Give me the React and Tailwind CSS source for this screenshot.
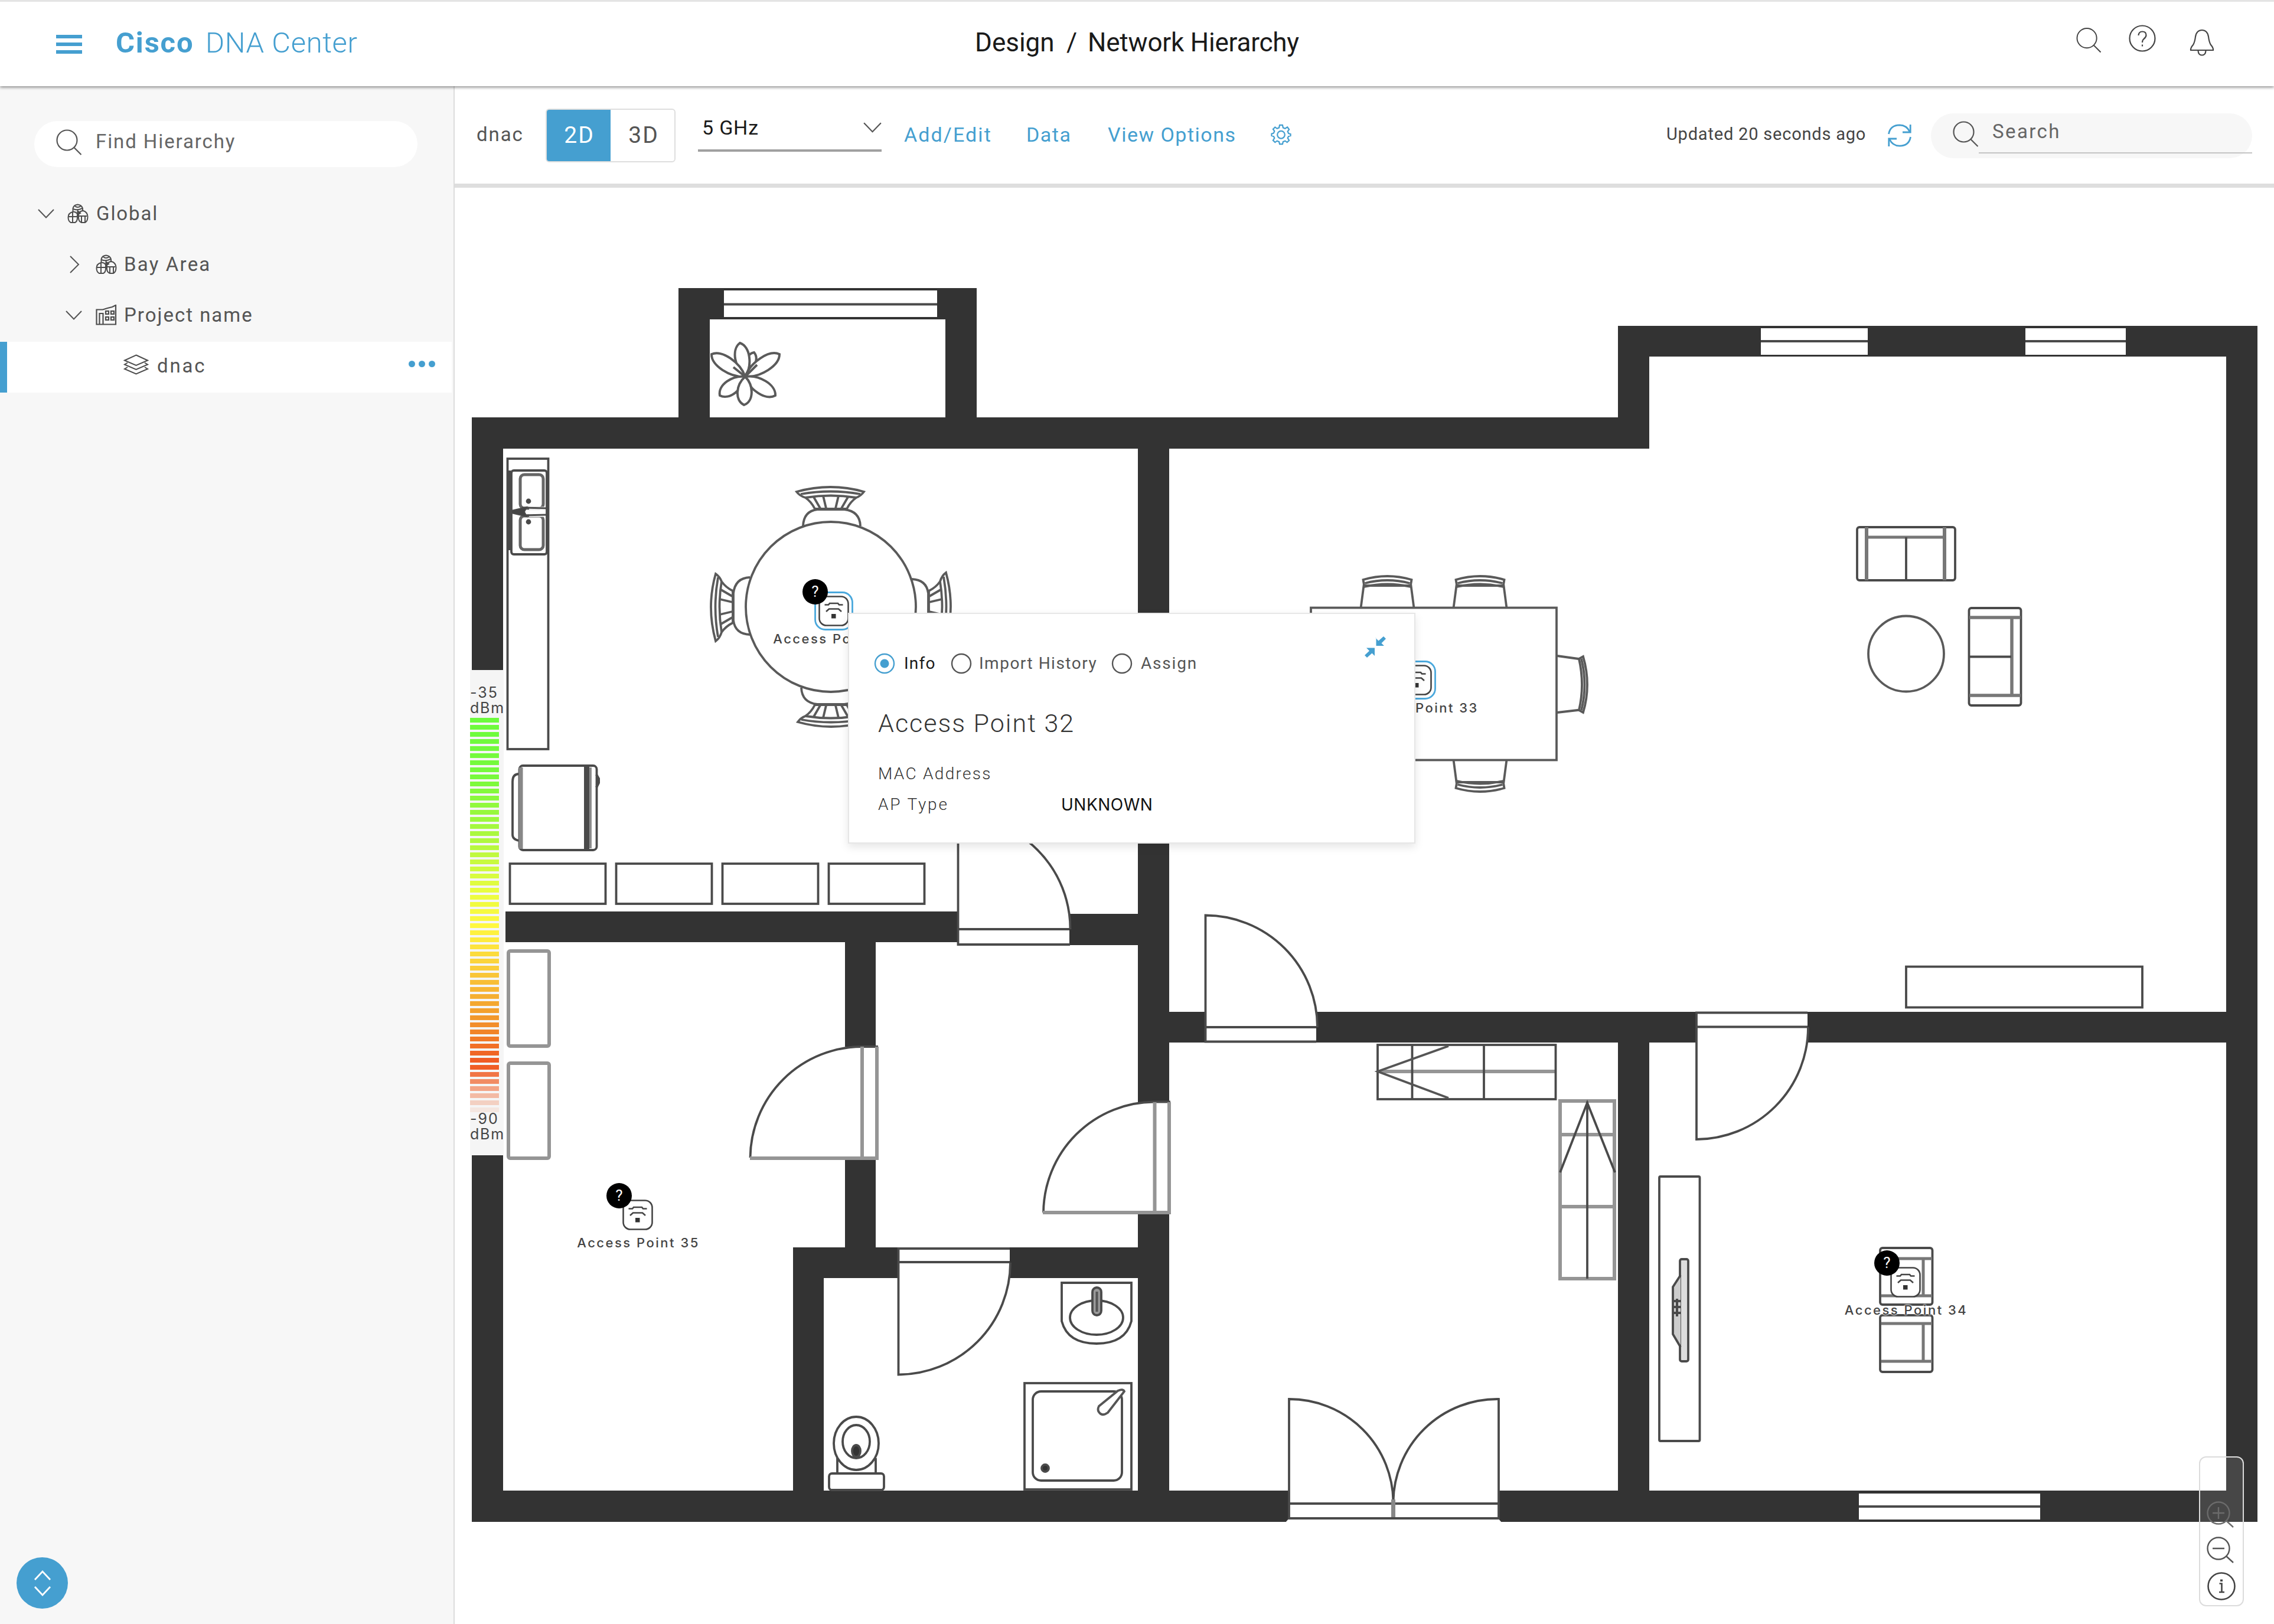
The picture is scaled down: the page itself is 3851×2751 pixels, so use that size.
import React from "react";

const MAP_X = 770;
const MAP_Y = 318;

/* ---------- small icons ---------- */

function SearchIcon({ className, color = "#555", width = 2.2 }) {
  return (
    <svg className={className} viewBox="0 0 44 44" fill="none" stroke={color} strokeWidth={width}>
      <circle cx="18.5" cy="18.5" r="17" />
      <path d="M30.5 31 L42.5 43" />
    </svg>
  );
}

function Chevron({ dir = "down", className }) {
  return (
    <svg className={className} viewBox="0 0 28 16" fill="none" stroke="#555" strokeWidth="2">
      {dir === "down" ? <path d="M1 1 L14 14.5 L27 1" /> : <path d="M7 -6 L21 8 L7 22" />}
    </svg>
  );
}

function SiteIcon() {
  return (
    <svg className="h-[34px] w-[36px] shrink-0" viewBox="0 0 36 34" fill="none" stroke="#4d4d4d" strokeWidth="2">
      <path d="M9.5 14 V8 Q11 2 17.500 1.500 Q24 2 26 8 V12" />
      <path d="M10 9 Q17 12 25 8 M13 4 Q17 8 23 4" />
      <path d="M17 17 Q13 13 9 14 Q1.500 16 1.500 23 Q1.500 30 6 32 H13 Q17 30 17 24 Z" />
      <path d="M19 17 Q22 12 27 12 Q34 14 34.500 22 Q34.500 30 30 32 H24 Q19 30 19 24 Z" />
      <path d="M9 15 V31 M2 22 H16 M24 21 V32 M30 21 V32 M20 21 H33" />
      <path d="M17.500 12 L22 16 L17 19 Z" fill="#4d4d4d" />
    </svg>
  );
}

function BuildingIcon() {
  return (
    <svg className="h-[35px] w-[36px] shrink-0" viewBox="0 0 36 35" fill="none" stroke="#4d4d4d" strokeWidth="2.200">
      <path d="M1.500 33.500 V8.500 H12 L20 6 L28 4 L34 1 V33.500 Z" />
      <path d="M6.500 33 V15 H12.500 V33" />
      <rect x="17" y="11" width="5" height="5" />
      <rect x="26" y="11" width="5" height="5" />
      <rect x="17" y="21" width="5" height="5" />
      <rect x="26" y="21" width="5" height="5" />
    </svg>
  );
}

function LayersIcon() {
  return (
    <svg className="h-[35px] w-[43px] shrink-0" viewBox="0 0 43 35" fill="none" stroke="#4d4d4d" strokeWidth="2">
      <path d="M21.500 1.500 L41 10.500 L21.500 19 L2 10.500 Z" />
      <path d="M7 14.500 L2 17.500 L21.500 26 L41 17.500 L36 14.500" />
      <path d="M7 22 L2 25 L21.500 33.500 L41 25 L36 22" />
    </svg>
  );
}

/* ---------- header ---------- */

function Header() {
  return (
    <header className="relative z-10 flex h-[146px] items-start border-t-[3px] border-[#e4e4e4] bg-white shadow-[0_2px_5px_rgba(0,0,0,0.45)]">
      <div className="flex w-[1651px] items-start">
        <div className="mt-[56px] ml-[95px] flex w-[44px] flex-col gap-[7px]">
          <div className="h-[6px] bg-[#459fd0]" />
          <div className="h-[6px] bg-[#459fd0]" />
          <div className="h-[6px] bg-[#459fd0]" />
        </div>
        <div className="mt-[40px] ml-[57px] flex leading-[60px] text-[49px] whitespace-nowrap text-[#459fd0]">
          <span className="w-[152px] font-bold tracking-[1.8px]">Cisco</span>
          <span className="font-light tracking-[0.6px]">DNA Center</span>
        </div>
      </div>
      <div className="mt-[39px] flex h-[60px] w-[1865px] text-[44px] leading-[60px] whitespace-nowrap text-[#1a1a1a]">
        <span className="w-[155px]">Design</span>
        <span className="w-[36px]">/</span>
        <span className="tracking-[-0.2px]">Network Hierarchy</span>
      </div>
      <SearchIcon className="mt-[43px] h-[44px] w-[43px]" color="#444" width={2} />
      <svg className="mt-[39px] ml-[46px] h-[46px] w-[46px]" viewBox="0 0 46 46" fill="none" stroke="#444" strokeWidth="2.200">
        <circle cx="23" cy="23" r="21.500" />
        <path d="M16.500 18 Q17 11.500 23 11.500 Q29.500 11.500 29.500 17.500 Q29.500 21 25.500 24 Q23 26 23 30" />
        <path d="M23 33.500 V36.500" />
      </svg>
      <svg className="mt-[46px] ml-[57px] h-[47px] w-[42px]" viewBox="0 0 42 47" fill="none" stroke="#444" strokeWidth="2.200">
        <path d="M2 36 Q1.500 32 6 27 Q9 22 10 13 Q12 2 21 2 Q30 2 32 13 Q33 22 36 27 Q40.500 32 40 36 Z" />
        <path d="M14.500 37 Q15 44.500 21 44.500 Q27 44.500 27.500 37" />
      </svg>
    </header>
  );
}

/* ---------- sidebar ---------- */

function Sidebar() {
  const label = "text-[33px] leading-[40px] whitespace-nowrap text-[#555]";
  return (
    <aside className="flex w-[770px] shrink-0 flex-col border-r-[2px] border-[#dcdcdc] bg-[#f7f7f7]">
      <div className="mt-[59px] ml-[58px] flex h-[78px] w-[649px] items-start rounded-full bg-white">
        <SearchIcon className="mt-[14px] ml-[37px] h-[44px] w-[44px]" />
        <span className="mt-[15px] ml-[23px] text-[33px] leading-[40px] tracking-[1.9px] text-[#666]">Find Hierarchy</span>
      </div>
      <div className="mt-[38px] flex h-[86px] items-center pb-[5px] pl-[64px]">
        <Chevron className="h-[16px] w-[28px]" />
        <div className="ml-[22px] flex"><SiteIcon /></div>
        <span className={`${label} ml-[13px] tracking-[1.9px]`}>Global</span>
      </div>
      <div className="flex h-[86px] items-center pb-[5px] pl-[112px]">
        <Chevron dir="right" className="h-[16px] w-[28px] overflow-visible" />
        <div className="ml-[22px] flex"><SiteIcon /></div>
        <span className={`${label} ml-[12px] tracking-[2.2px]`}>Bay Area</span>
      </div>
      <div className="flex h-[86px] items-center pb-[5px] pl-[111px]">
        <Chevron className="h-[16px] w-[28px]" />
        <div className="ml-[23px] flex"><BuildingIcon /></div>
        <span className={`${label} ml-[12px] tracking-[2px]`}>Project name</span>
      </div>
      <div className="mr-[3px] flex h-[86px] items-center border-l-[12px] border-[#459fd0] bg-white pl-[197px]">
        <div className="mt-[-10px] flex"><LayersIcon /></div>
        <span className={`${label} mt-[-5px] ml-[14px] tracking-[2.8px]`}>dnac</span>
        <div className="mt-[-11px] mr-[28px] ml-auto flex gap-[6px]">
          <div className="h-[11px] w-[11px] rounded-full bg-[#459fd0]" />
          <div className="h-[11px] w-[11px] rounded-full bg-[#459fd0]" />
          <div className="h-[11px] w-[11px] rounded-full bg-[#459fd0]" />
        </div>
      </div>
      <div className="mt-auto mb-[26px] ml-[28px] flex h-[87px] w-[87px] items-center justify-center rounded-full bg-[#459fd0]">
        <svg className="h-[46px] w-[34px]" viewBox="0 0 34 46" fill="none" stroke="#fff" strokeWidth="2.800">
          <path d="M4 17 L17 3 L30 17 M4 29 L17 43 L30 29" />
        </svg>
      </div>
    </aside>
  );
}

/* ---------- toolbar ---------- */

function Toolbar() {
  const link = "text-[34px] leading-[40px] whitespace-nowrap text-[#459fd0]";
  return (
    <div className="flex h-[172px] items-start border-b-[7px] border-[#dedede] bg-white">
      <span className="mt-[62px] ml-[37px] w-[117px] text-[33px] leading-[40px] tracking-[1.9px] text-[#555]">dnac</span>
      <div className="mt-[38px] flex h-[91px] w-[220px] overflow-hidden rounded-[6px] border-[2px] border-[#dedede] text-[39px]">
        <div className="mt-[-2px] ml-[-2px] flex h-[91px] w-[110px] items-center justify-center bg-[#459fd0] pl-[4px] tracking-[2px] text-white">2D</div>
        <div className="flex w-[108px] items-center justify-center pl-[4px] tracking-[2px] text-[#555]">3D</div>
      </div>
      <div className="mt-[38px] ml-[38px] flex h-[73px] w-[311px] items-start border-b-[4px] border-[#a0a0a0]">
        <span className="mt-[12px] ml-[7px] text-[34px] leading-[40px] tracking-[0.8px] text-[#1a1a1a]">5 GHz</span>
        <Chevron className="mt-[23px] ml-auto h-[18px] w-[31px]" />
      </div>
      <span className={`${link} mt-[62px] ml-[38px] w-[207px] tracking-[2.1px]`}>Add/Edit</span>
      <span className={`${link} mt-[62px] w-[138px] tracking-[1.5px]`}>Data</span>
      <span className={`${link} mt-[62px] w-[276px] tracking-[1.5px]`}>View Options</span>
      <svg className="mt-[64px] h-[36px] w-[35px]" viewBox="0 0 36 36" fill="none" stroke="#459fd0" strokeWidth="2.300">
        <path d="M15.500 1.500 H20.500 L21.500 6 L25 7.500 L29 5 L32 9 L29.500 12.500 L31 16 L34.500 17 V20 L31 21 L29.500 24 L32 28 L28.500 31.500 L25 29 L21.500 30.500 L20.500 34.500 H15.500 L14.500 30.500 L11 29 L7.500 31.500 L4 28 L6.500 24 L5 21 L1.500 20 V16.500 L5 15.500 L6.500 12 L4 8.500 L7.500 5 L11 7.500 L14.500 6 Z" />
        <circle cx="18" cy="18.200" r="6.500" />
      </svg>
      <span className="mt-[61px] ml-auto w-[375px] text-[29px] leading-[40px] tracking-[0.8px] whitespace-nowrap text-[#444]">Updated 20 seconds ago</span>
      <svg className="mt-[64px] h-[39px] w-[40px]" viewBox="0 0 40 39" fill="none" stroke="#459fd0" strokeWidth="2.800">
        <path d="M1.500 17 Q4 2 20 1.800 Q32 2 37 13" />
        <path d="M38.200 1 V14 H25" />
        <path d="M38.500 22 Q36 37 20 37.200 Q8 37 3 26" />
        <path d="M1.800 38 V25 H15" />
      </svg>
      <div className="mt-[46px] mr-[37px] ml-[33px] flex h-[76px] w-[544px] items-start rounded-full bg-[#f7f7f7]">
        <SearchIcon className="mt-[13px] ml-[37px] h-[44px] w-[44px]" />
        <div className="flex h-[68px] flex-1 items-start border-b-[2px] border-[#c4c4c4]">
          <span className="mt-[11px] ml-[23px] text-[33px] leading-[40px] tracking-[2.4px] text-[#666]">Search</span>
        </div>
      </div>
    </div>
  );
}

/* ---------- floor plan drawing ---------- */

function Petal({ x, y, w = 11 }) {
  const cx = 1262, cy = 638;
  const len = Math.hypot(x - cx, y - cy);
  const ang = (Math.atan2(y - cy, x - cx) * 180) / Math.PI;
  return (
    <path
      transform={`translate(${cx} ${cy}) rotate(${ang})`}
      d={`M0 0 C ${len * 0.3} ${-w * 1.400} ${len * 0.850} ${-w * 1.500} ${len} 0 C ${len * 0.850} ${w * 1.500} ${len * 0.300} ${w * 1.400} 0 0 Z`}
    />
  );
}

function DiningChair({ angle }) {
  return (
    <g transform={`rotate(${angle} 1407 1028)`}>
      <path d="M1349 833 Q1407 817 1463 833 Q1458 840 1450 843 Q1440 850 1434 862 H1380 Q1374 850 1364 843 Q1354 840 1349 833 Z" />
      <path d="M1356 837 Q1407 828 1457 837 M1364 843 Q1407 836 1450 843" />
      <path d="M1378 842 L1389 861 M1394 840 L1399 861 M1420 840 L1415 861 M1436 842 L1425 861" />
      <path d="M1360 891 Q1361 866 1384 863 H1430 Q1456 866 1457 891" />
    </g>
  );
}

function TopChair({ x }) {
  return (
    <g transform={`translate(${x} 0)`}>
      <path d="M-45 1030 L-40 992 H40 L45 1030" />
      <path d="M-41 982 Q0 970 41 982 L39 994 Q0 985 -39 994 Z" />
      <path d="M-38 988 Q0 978 38 988" />
    </g>
  );
}

function FloorPlan() {
  return (
    <svg className="block h-[2433px] w-[3081px]" viewBox="770 318 3081 2433">
      {/* walls */}
      <g fill="#333">
        <path d="M1149 488 H1654 V707 H2740 V552 H3823 V2578 H799 V707 H1149 Z" />
      </g>
      <g fill="#fff">
        <rect x="1202" y="541" width="399" height="166" />
        <path d="M852 760 H1927 V1548 H1811 V1544 H852 Z" />
        <path d="M1980 760 H2793 V604 H3770 V1714 H1980 Z" />
        <path d="M852 1596 H1431 V2113 H1343 V2525 H852 Z" />
        <path d="M1483 1596 H1640 V1601 H1927 V2113 H1483 Z" />
        <rect x="1395" y="2165" width="532" height="360" />
        <rect x="1980" y="1766" width="760" height="759" />
        <rect x="2793" y="1766" width="977" height="759" />
        {/* window and door openings */}
        <rect x="1226" y="492" width="361" height="45" />
        <rect x="2982" y="556" width="181" height="45" />
        <rect x="3430" y="556" width="170" height="45" />
        <rect x="3148" y="2530" width="307" height="44" />
        <rect x="1624" y="1540" width="187" height="62" />
        <rect x="2043" y="1710" width="186" height="58" />
        <rect x="2874" y="1717" width="187" height="50" />
        <path d="M2183 2520 H2537 V2572 L2544 2580 H2176 L2183 2572 Z" />
        <rect x="1425" y="1773" width="62" height="191" />
        <rect x="1920" y="1867" width="62" height="188" />
        <rect x="1522" y="2117" width="188" height="50" />
        <rect x="850" y="1540" width="6" height="60" />
      </g>
      <g fill="none" stroke="#4a4a4a" strokeWidth="3.800">
        <path d="M1226 515.500 H1587 M2982 578 H3163 M3430 578 H3600 M3148 2552 H3455" />
        <path d="M1622.500 1384 V1600 H1812 M1624 1574 H1811" />
        <path d="M1622.500 1384 A190 190 0 0 1 1812.500 1574" />
        <path d="M2229 1764.500 H2041.500 V1550.500 A190 190 0 0 1 2231 1740 M2043 1740 H2229" />
        <path d="M3061 1715.500 H2873 V1930 A190 190 0 0 0 3062 1740 M2873 1739.500 H3061" />
        <path d="M2183 2572 V2370 A176 176 0 0 1 2359.500 2546 A176 176 0 0 1 2538 2370 V2572 Z M2183 2547 H2538" />
        <path d="M2359.500 2540 V2570" stroke="#888" strokeWidth="7" />
        <path d="M1710 2115 H1521.500 V2328.500 A190 190 0 0 0 1711 2139 M1522 2138 H1710" />
        <path d="M1487 1773 H1460 A190 190 0 0 0 1270.500 1961" />
        <path d="M1982 1866.500 H1955 A189 189 0 0 0 1767 2054" />
      </g>
      <g fill="none" stroke="#959595" strokeWidth="6">
        <path d="M1270 1962 H1485 V1773 M1460 1773 V1963" />
        <path d="M1766 2054 H1980 V1867 M1955.500 1867 V2054" />
        <rect x="861" y="1611" width="69" height="161" rx="3" />
        <rect x="861" y="1801" width="69" height="161" rx="3" />
        <path d="M2333 1815 H2635" />
        <rect x="2642" y="1865" width="92" height="301" />
        <path d="M2642 1922 H2734 M2642 2044 H2734" />
      </g>

      <g fill="none" stroke="#4a4a4a" strokeWidth="3.800">
        {/* plant */}
        <g fill="#fff" stroke="#5a5a5a" strokeWidth="4">
          <Petal x={1277} y={597} w={8} />
          <Petal x={1253} y={581} />
          <Petal x={1320} y={600} />
          <Petal x={1205} y={600} />
          <Petal x={1313} y={670} />
          <Petal x={1219} y={670} />
          <Petal x={1260} y={686} />
          <path d="M1262 638 L1242 622 M1262 638 L1282 618" />
        </g>

        {/* kitchen counter with sink */}
        <rect x="859.500" y="777" width="69" height="492" />
        <path d="M862 797 V932" strokeWidth="6" />
        <rect x="866" y="797" width="60" height="142" rx="4" />
        <rect x="881" y="804" width="39" height="57" rx="7" stroke="#666" strokeWidth="5" />
        <rect x="881" y="874" width="39" height="57" rx="7" stroke="#666" strokeWidth="5" />
        <path d="M896 861 H924 M896 873 H924" stroke="#fff" strokeWidth="5" />
        <path d="M867 867 H884 M884 860 L926 861 M884 873 L926 872" strokeWidth="3" />
        <path d="M866 865 L892 859 L888 867 L892 875 L866 869 Z" fill="#444" strokeWidth="2" />
        <circle cx="895" cy="849" r="2.500" fill="#444" />
        <circle cx="895" cy="884" r="2.500" fill="#444" />

        {/* stove */}
        <path d="M879 1311 Q868 1311 868 1324 V1414 Q868 1422 879 1424" />
        <rect x="879.500" y="1297" width="131" height="143" rx="6" />
        <path d="M882 1300 V1438" stroke="#888" strokeWidth="7" />
        <path d="M993.500 1297 V1440" strokeWidth="9" />
        <path d="M1000 1300 V1437" stroke="#888" />
        <path d="M1010 1312 L1014 1319 V1326 L1010 1334" strokeWidth="4" />

        {/* lower cabinets */}
        <rect x="863.500" y="1463" width="162" height="68" />
        <rect x="1043.500" y="1463" width="162" height="68" />
        <rect x="1223.500" y="1463" width="162" height="68" />
        <rect x="1403.500" y="1463" width="162" height="68" />

        {/* round dining table */}
        <g stroke="#5a5a5a">
          <DiningChair angle={0} />
          <DiningChair angle={90} />
          <DiningChair angle={180} />
          <DiningChair angle={270} />
          <circle cx="1407" cy="1028" r="144" fill="#fff" />
        </g>

        {/* conference table */}
        <g stroke="#5a5a5a">
          <TopChair x={2349.500} />
          <TopChair x={2506.500} />
          <g transform="translate(0 2317) scale(1 -1)">
            <TopChair x={2349.500} />
            <TopChair x={2506.500} />
          </g>
          <path d="M2637 1111 L2680 1117 M2637 1207 L2680 1202" />
          <path d="M2674 1116 Q2684 1160 2674 1203 L2681 1207 Q2695 1160 2681 1112 Z" fill="#fff" />
          <path d="M2678 1116 Q2689 1160 2678 1203" />
          <rect x="2220" y="1029.500" width="416" height="258" fill="#fff" />
        </g>

        {/* living room seating */}
        <rect x="3145" y="893" width="166" height="90" rx="4" />
        <path d="M3161 893 V983 M3293 893 V983" stroke="#777" strokeWidth="6" />
        <path d="M3161 910 H3293" stroke="#777" strokeWidth="5" />
        <path d="M3228 910 V983" />
        <circle cx="3228" cy="1107.500" r="64" stroke="#5a5a5a" />
        <rect x="3334.500" y="1030" width="88" height="165" rx="4" />
        <path d="M3335 1046 H3422 M3335 1178 H3422" stroke="#777" strokeWidth="5.500" />
        <path d="M3407 1046 V1178" stroke="#777" strokeWidth="5.500" />
        <path d="M3335 1112.500 H3406" />
        <rect x="3228" y="1637.500" width="400" height="69" />

        {/* hall shelves */}
        <rect x="2333" y="1770" width="301.500" height="92" />
        <path d="M2391.500 1770 V1862 M2513 1770 V1862" />
        <path d="M2453 1772 L2333 1815 L2453 1860" stroke="#555" />
        <path d="M2688 1866 V2166" />
        <path d="M2642 1986 L2688 1868 L2735 1986" />

        {/* wash basin */}
        <path d="M1798 2173 H1916 V2238 Q1906 2276 1857 2276 Q1808 2276 1798 2238 Z" />
        <ellipse cx="1857" cy="2232" rx="45" ry="29" />
        <rect x="1850" y="2181" width="15" height="47" rx="7.500" fill="#999" />
        <path d="M1857.500 2188 V2222" stroke="#555" strokeWidth="4" />

        {/* shower */}
        <rect x="1735" y="2343" width="181" height="180" />
        <rect x="1749" y="2357" width="151" height="151" rx="14" />
        <circle cx="1770" cy="2487" r="6" fill="#333" />
        <path d="M1861 2382 L1893 2356 Q1902 2352 1904 2357 L1876 2393 Q1866 2400 1861 2392 Q1858 2388 1861 2382 Z" fill="#fff" stroke="#555" />

        {/* toilet */}
        <path d="M1418 2470 V2496 H1483 V2470" />
        <rect x="1404" y="2496" width="93" height="28" rx="5" fill="#fff" />
        <ellipse cx="1450" cy="2445" rx="38" ry="45" fill="#fff" />
        <ellipse cx="1450" cy="2442" rx="23" ry="28" />
        <ellipse cx="1450" cy="2458" rx="7" ry="10" fill="#333" />

        {/* television bench */}
        <rect x="2810" y="1993" width="68.500" height="448" rx="2" />
        <rect x="2845" y="2133" width="14" height="173" rx="3" fill="#ddd" />
        <path d="M2846 2160 L2833 2180 V2260 L2846 2282" fill="#ccc" />
        <path d="M2834 2204 H2846 M2834 2214 H2846 M2834 2224 H2846 M2840 2200 V2230" strokeWidth="4" />

        {/* paired armchairs */}
        <rect x="3184" y="2114" width="88.500" height="96" rx="4" />
        <path d="M3186 2132 H3272 M3186 2195 H3272 M3257 2132 V2195" stroke="#777" strokeWidth="5" />
        <rect x="3184" y="2228" width="88.500" height="96" rx="4" />
        <path d="M3186 2242 H3272 M3186 2306 H3272 M3257 2242 V2306" stroke="#777" strokeWidth="5" />
      </g>
    </svg>
  );
}

/* ---------- map overlays ---------- */

const accessPoints = [
  { name: "Access Point 32", x: 1412, y: 1035, active: true },
  { name: "Access Point 33", x: 2399, y: 1152, active: true },
  { name: "Access Point 35", x: 1080, y: 2058 },
  { name: "Access Point 34", x: 3227, y: 2172 },
];

function AccessPoint({ name, x, y, active }) {
  return (
    <div className="absolute flex w-[220px] flex-col items-center" style={{ left: x - MAP_X - 110, top: y - MAP_Y - 33 }}>
      <div className="relative h-[66px] w-[66px]">
        <svg className="h-[66px] w-[66px]" viewBox="-33 -33 66 66" fill="none">
          {active && <rect x="-31.500" y="-31.500" width="63" height="63" rx="17" fill="#fff" stroke="#4aa8dc" strokeWidth="2.800" />}
          <rect x="-24.500" y="-24.500" width="49" height="49" rx="12" fill="#fff" stroke="#444" strokeWidth="2.600" />
          <path d="M-15.500 -10.500 H-9 L-7 -13 H7 L9 -10.500 H15.500" stroke="#444" strokeWidth="2.600" />
          <path d="M-13 1 L-8 -3.500 H8 L13 1" stroke="#444" strokeWidth="2.600" />
          <rect x="-4" y="5" width="7.500" height="7.500" fill="#333" />
        </svg>
        <div className="absolute -top-[21px] -left-[20px] flex h-[43px] w-[43px] items-center justify-center rounded-full bg-black text-[26px] text-white">?</div>
      </div>
      <span className="pl-[2px] font-['Inter',sans-serif] text-[22px] leading-[28px] font-medium tracking-[2.5px] whitespace-nowrap text-[#444] [text-shadow:0_0_3px_#fff,0_0_3px_#fff,0_0_2px_#fff]">
        {name}
      </span>
    </div>
  );
}

const stops = [
  [0, [108, 251, 60]],
  [8, [120, 249, 60]],
  [17, [176, 248, 62]],
  [24, [232, 253, 64]],
  [29, [255, 248, 64]],
  [35, [250, 205, 58]],
  [42, [242, 152, 44]],
  [48, [240, 92, 36]],
  [55, [240, 100, 44]],
];

function barColor(i) {
  const k = stops.findIndex((s, n) => n > 0 && i <= s[0]);
  const [a, ca] = stops[k - 1];
  const [b, cb] = stops[k];
  const t = (i - a) / (b - a);
  const rgb = ca.map((v, n) => Math.round(v + (cb[n] - v) * t));
  const alpha = i <= 49 ? 1 : 1 - (i - 49) * 0.15;
  return `rgba(${rgb.join(",")},${alpha})`;
}

function Legend() {
  const txt = "font-['Inter',sans-serif] text-[25px] leading-[26px] text-[#444]";
  return (
    <div className="absolute top-[817px] left-[26px] flex h-[822px] w-[57px] flex-col bg-[#f5f5f5] whitespace-nowrap">
      <div className={`${txt} mt-[25px] h-[56px]`}>
        <div className="tracking-[2px]">-35</div>
        <div className="tracking-[1.8px]">dBm</div>
      </div>
      <div className="flex w-[49px] flex-col gap-[4px]">
        {Array.from({ length: 56 }, (_, i) => (
          <div key={i} className="h-[8px]" style={{ background: barColor(i) }} />
        ))}
      </div>
      <div className={`${txt} mt-[-2px]`}>
        <div className="tracking-[2px]">-90</div>
        <div className="tracking-[1.8px]">dBm</div>
      </div>
    </div>
  );
}

function Radio({ checked }) {
  return (
    <svg className="h-[36px] w-[36px] shrink-0" viewBox="0 0 36 36" fill="none">
      <circle cx="18" cy="18" r="16" stroke={checked ? "#459fd0" : "#555"} strokeWidth="2.400" />
      {checked && <circle cx="18" cy="18" r="7.500" fill="#459fd0" />}
    </svg>
  );
}

function Popup() {
  return (
    <div className="absolute top-[720px] left-[666px] flex h-[391px] w-[961px] flex-col border-[2px] border-[#e6e6e6] bg-white pl-[42px] shadow-[0_6px_14px_rgba(0,0,0,0.1)]">
      <svg className="absolute top-[38px] left-[872px] h-[36px] w-[38px]" viewBox="0 0 38 36" fill="#459fd0">
        <path d="M19 2 L24.500 7.500 L33 0 L37 4 L29.500 11.500 L34 16 H20.500 V3 Z" />
        <path d="M4 19.500 H18 V33 L13.500 28.500 L5 36 L1 32 L9 24.500 Z" />
      </svg>
      <div className="mt-[64px] flex h-[40px] items-center text-[28px] leading-[40px] whitespace-nowrap text-[#555]">
        <Radio checked />
        <span className="ml-[15px] w-[79px] tracking-[1.2px] text-[#1a1a1a]">Info</span>
        <Radio />
        <span className="ml-[12px] w-[224px] tracking-[1.5px]">Import History</span>
        <Radio />
        <span className="ml-[14px] tracking-[1.8px]">Assign</span>
      </div>
      <div className="mt-[51px] ml-[7px] h-[60px] text-[43px] leading-[60px] font-light tracking-[2px] text-[#333]">Access Point 32</div>
      <div className="mt-[30px] ml-[7px] flex h-[52px] items-center text-[28px]">
        <span className="w-[310px] font-light tracking-[2.3px] text-[#333]">MAC Address</span>
      </div>
      <div className="ml-[7px] flex h-[52px] items-center text-[28px]">
        <span className="w-[310px] font-light tracking-[2.800px] text-[#333]">AP Type</span>
        <span className="font-['Inter',sans-serif] tracking-[0.5px] text-[#111]">UNKNOWN</span>
      </div>
    </div>
  );
}

function ZoomControls() {
  return (
    <div className="absolute top-[2149px] left-[2954px] flex h-[254px] w-[76px] flex-col items-center gap-[15px] rounded-[12px] border-[2px] border-[#dcdcdc] bg-white/10 pt-[74px]">
      <svg className="mr-[4px] h-[45px] w-[46px] shrink-0" viewBox="0 0 46 45" fill="none" stroke="#6b6b6b" strokeWidth="2.400">
        <circle cx="20" cy="20" r="18.500" />
        <path d="M33 33 L45 44 M10 20 H30 M20 10 V30" />
      </svg>
      <svg className="mr-[4px] h-[45px] w-[46px] shrink-0" viewBox="0 0 46 45" fill="none" stroke="#555" strokeWidth="2.400">
        <circle cx="20" cy="20" r="18.500" />
        <path d="M33 33 L45 44 M10 20 H30" />
      </svg>
      <svg className="h-[48px] w-[48px] shrink-0" viewBox="0 0 48 48" fill="none" stroke="#444" strokeWidth="2.600">
        <circle cx="24" cy="24" r="22.500" />
        <path d="M20.500 19.500 H24.500 V33 M20 34 H29" />
        <path d="M24 12.500 V16" strokeWidth="4" />
      </svg>
    </div>
  );
}

export default function App() {
  return (
    <div className="flex h-[2751px] w-[3851px] flex-col overflow-hidden bg-white font-['Roboto',sans-serif]">
      <Header />
      <div className="flex flex-1">
        <Sidebar />
        <main className="flex w-[3081px] flex-col">
          <Toolbar />
          <div className="relative">
            <FloorPlan />
            <Legend />
            {accessPoints.map((ap) => (
              <AccessPoint key={ap.name} {...ap} />
            ))}
            <Popup />
            <ZoomControls />
          </div>
        </main>
      </div>
    </div>
  );
}
